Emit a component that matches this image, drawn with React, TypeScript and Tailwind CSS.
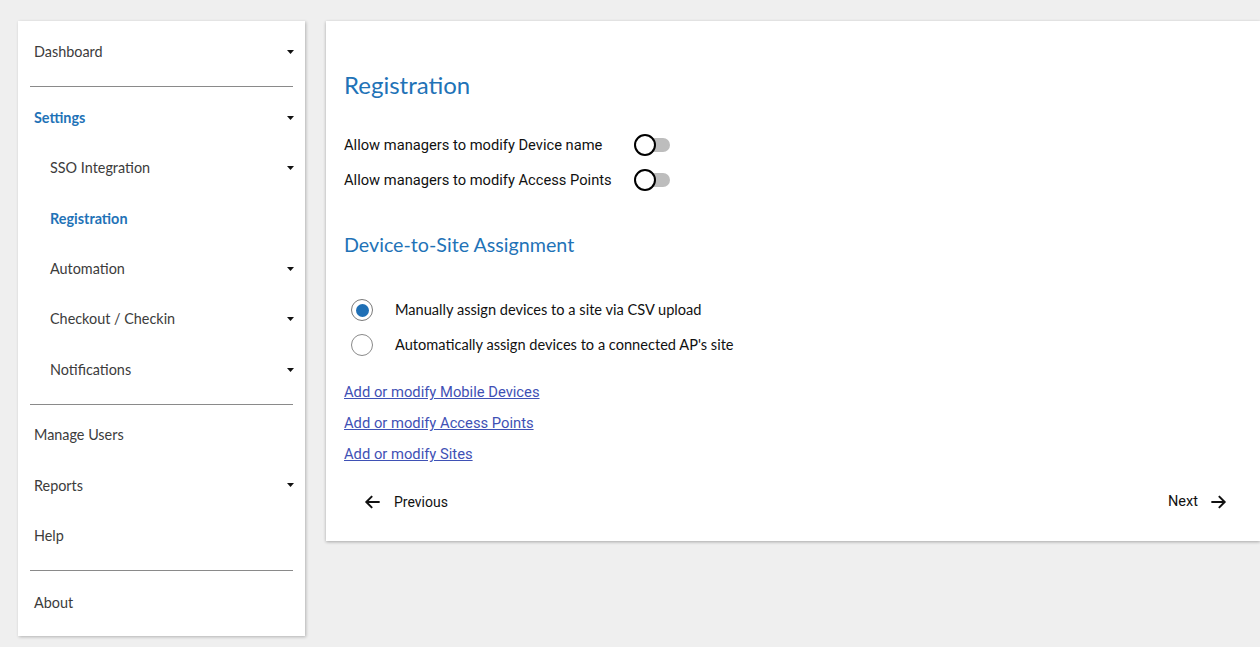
import React from "react";

const sideFont = { fontFamily: "Lato, 'Open Sans', sans-serif" };

function Caret() {
    return (
        <svg width="7" height="4" viewBox="0 0 7 4" className="shrink-0">
            <path d="M0 0 L7 0 L3.5 4 Z" fill="#111" />
        </svg>
    );
}

type Item = { label: string; nested?: boolean; active?: boolean; caret?: boolean };

function NavItem({ item }: { item: Item }) {
    return (
        <div className={`h-[50.4px] flex items-center justify-between pr-[11px] ${item.nested ? "pl-[32px]" : "pl-[16px]"}`}>
            <span className={`text-[14.4px] ${item.active ? "text-[#1f73b7] font-bold" : "text-[#3c3c3c]"}`}>{item.label}</span>
            {item.caret && <Caret />}
        </div>
    );
}

function Divider({ last }: { last?: boolean }) {
    return <div className={`mx-[12px] mt-[9px] h-px bg-[#8a8a8a] ${last ? "mb-[7px]" : "mb-[5px]"}`} />;
}

function Toggle() {
    return (
        <div className="relative w-[38px] h-[22px] flex items-center">
            <div className="absolute left-[10px] right-[2px] h-[14px] rounded-full bg-[#bdbdbd]" />
            <div className="absolute left-0 w-[22px] h-[22px] rounded-full bg-white border-2 border-black" />
        </div>
    );
}

function Radio({ checked }: { checked?: boolean }) {
    return (
        <div className={`w-[22px] h-[22px] rounded-full border-[1.5px] flex items-center justify-center ${checked ? "border-[#7a7a7a]" : "border-[#8a8a8a]"}`}>
            {checked && <div className="w-[13px] h-[13px] rounded-full bg-[#1f6fb5]" />}
        </div>
    );
}

export default function App() {
    const top: Item[] = [{ label: "Dashboard", caret: true }];
    const settings: Item[] = [
        { label: "Settings", caret: true, active: true },
        { label: "SSO Integration", nested: true, caret: true },
        { label: "Registration", nested: true, active: true },
        { label: "Automation", nested: true, caret: true },
        { label: "Checkout / Checkin", nested: true, caret: true },
        { label: "Notifications", nested: true, caret: true },
    ];
    const more: Item[] = [
        { label: "Manage Users" },
        { label: "Reports", caret: true },
        { label: "Help" },
    ];

    return (
        <div className="min-h-[647px] bg-[#efefef] flex items-start gap-[21px] pl-[18px] pt-[21px]" style={{ fontFamily: "Roboto, sans-serif" }}>
            <nav className="w-[287px] shrink-0 bg-white shadow-[1px_1px_3px_rgba(0,0,0,0.25)] pt-[6px] pb-[8px]" style={sideFont}>
                {top.map((i) => <NavItem key={i.label} item={i} />)}
                <Divider />
                {settings.map((i) => <NavItem key={i.label} item={i} />)}
                <Divider />
                {more.map((i) => <NavItem key={i.label} item={i} />)}
                <Divider last />
                <NavItem item={{ label: "About" }} />
            </nav>

            <main className="flex-1 bg-white shadow-[0_1px_3px_rgba(0,0,0,0.3)] pl-[18px] pr-[32px] pt-[48px] pb-[20px] min-h-[520px]">
                <h1 className="text-[24px] text-[#1f73b7] leading-[32px]" style={sideFont}>Registration</h1>

                <div className="mt-[33px] flex flex-col gap-[13px] text-[14.7px] text-[#111]">
                    <div className="flex items-center">
                        <span className="w-[290px]">Allow managers to modify Device name</span>
                        <Toggle />
                    </div>
                    <div className="flex items-center">
                        <span className="w-[290px]">Allow managers to modify Access Points</span>
                        <Toggle />
                    </div>
                </div>

                <h2 className="mt-[41px] text-[19.7px] text-[#1f73b7] leading-[26px]" style={sideFont}>Device-to-Site Assignment</h2>

                <div className="mt-[41px] flex flex-col gap-[13px] pl-[7px] text-[14.6px] text-[#111]" style={sideFont}>
                    <label className="flex items-center gap-[22px]">
                        <Radio checked />
                        <span>Manually assign devices to a site via CSV upload</span>
                    </label>
                    <label className="flex items-center gap-[22px]">
                        <Radio />
                        <span>Automatically assign devices to a connected AP's site</span>
                    </label>
                </div>

                <div className="mt-[27px] flex flex-col gap-[12px] text-[14.75px]">
                    <a href="#" className="text-[#3f51b5] underline leading-[19px] w-fit">Add or modify Mobile Devices</a>
                    <a href="#" className="text-[#3f51b5] underline leading-[19px] w-fit">Add or modify Access Points</a>
                    <a href="#" className="text-[#3f51b5] underline leading-[19px] w-fit">Add or modify Sites</a>
                </div>

                <div className="mt-[20px] flex justify-between items-center text-[14px] text-[#111]">
                    <button className="flex items-center gap-[11px] px-[19px] h-[36px]">
                        <svg width="20" height="20" viewBox="0 0 24 24" fill="none" stroke="#111" strokeWidth="2.4">
                            <path d="M20 12H4M11 5l-7 7 7 7" />
                        </svg>
                        <span>Previous</span>
                    </button>
                    <button className="flex items-center gap-[10px] h-[36px]">
                        <span className="text-[14.5px]">Next</span>
                        <svg width="20" height="20" viewBox="0 0 24 24" fill="none" stroke="#111" strokeWidth="2.4">
                            <path d="M4 12h16M13 5l7 7-7 7" />
                        </svg>
                    </button>
                </div>
            </main>
        </div>
    );
}
